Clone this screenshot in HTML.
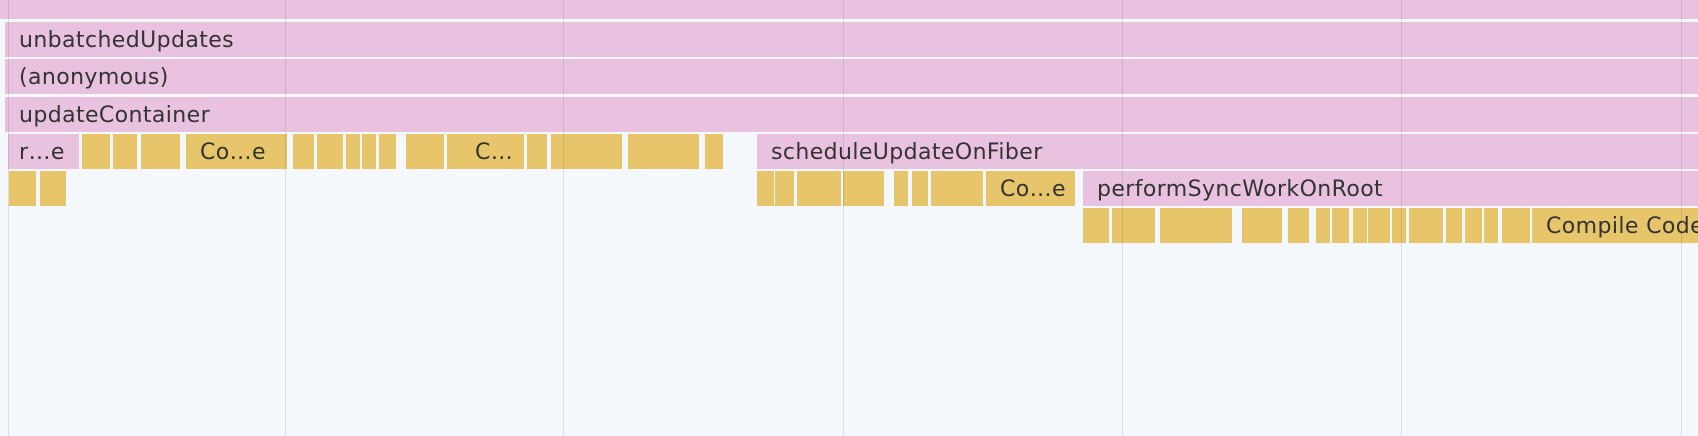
<!DOCTYPE html>
<html><head><style>
html,body{margin:0;padding:0}
body{width:1698px;height:436px;background:#f5f8fc;position:relative;overflow:hidden;font-family:"DejaVu Sans","Liberation Sans",sans-serif}
.b{position:absolute;height:35px;box-sizing:border-box;font-size:22px;line-height:37px;color:#333;padding-left:14px;white-space:nowrap;overflow:hidden;letter-spacing:0.4px}
.p{background:#e9c2e0}
.y{background:#e7c56a}
.g{position:absolute;top:0;width:1px;height:436px;background:rgba(0,0,0,0.1)}
</style></head><body>
<div class="b p" style="left:0;top:0;width:1698px;height:19px"></div>
<div class="b p" style="left:5px;top:22px;width:1693px">unbatchedUpdates</div>
<div class="b p" style="left:5px;top:59px;width:1693px">(anonymous)</div>
<div class="b p" style="left:5px;top:97px;width:1693px">updateContainer</div>
<div class="b p" style="left:8px;top:134px;width:71px;padding-left:11px">r…e</div>
<div class="b y" style="left:82px;top:134px;width:28px"></div>
<div class="b y" style="left:113px;top:134px;width:24px"></div>
<div class="b y" style="left:141px;top:134px;width:39px"></div>
<div class="b y" style="left:186px;top:134px;width:101px">Co…e</div>
<div class="b y" style="left:293px;top:134px;width:21px"></div>
<div class="b y" style="left:317px;top:134px;width:26px"></div>
<div class="b y" style="left:346px;top:134px;width:13px"></div>
<div class="b y" style="left:362px;top:134px;width:14px"></div>
<div class="b y" style="left:379px;top:134px;width:17px"></div>
<div class="b y" style="left:406px;top:134px;width:10px"></div>
<div class="b y" style="left:419px;top:134px;width:25px"></div>
<div class="b y" style="left:447px;top:134px;width:11px"></div>
<div class="b y" style="left:461px;top:134px;width:63px">C…</div>
<div class="b y" style="left:527px;top:134px;width:20px"></div>
<div class="b y" style="left:551px;top:134px;width:71px"></div>
<div class="b y" style="left:628px;top:134px;width:11px"></div>
<div class="b y" style="left:641px;top:134px;width:58px"></div>
<div class="b y" style="left:705px;top:134px;width:18px"></div>
<div class="b p" style="left:757px;top:134px;width:941px">scheduleUpdateOnFiber</div>
<div class="b y" style="left:9px;top:171px;width:27px"></div>
<div class="b y" style="left:40px;top:171px;width:26px"></div>
<div class="b y" style="left:757px;top:171px;width:17px"></div>
<div class="b y" style="left:775px;top:171px;width:19px"></div>
<div class="b y" style="left:797px;top:171px;width:44px"></div>
<div class="b y" style="left:843px;top:171px;width:41px"></div>
<div class="b y" style="left:894px;top:171px;width:14px"></div>
<div class="b y" style="left:912px;top:171px;width:16px"></div>
<div class="b y" style="left:931px;top:171px;width:52px"></div>
<div class="b y" style="left:986px;top:171px;width:89px">Co…e</div>
<div class="b p" style="left:1083px;top:171px;width:615px">performSyncWorkOnRoot</div>
<div class="b y" style="left:1083px;top:208px;width:26px"></div>
<div class="b y" style="left:1112px;top:208px;width:43px"></div>
<div class="b y" style="left:1160px;top:208px;width:11px"></div>
<div class="b y" style="left:1173px;top:208px;width:59px"></div>
<div class="b y" style="left:1242px;top:208px;width:40px"></div>
<div class="b y" style="left:1288px;top:208px;width:21px"></div>
<div class="b y" style="left:1316px;top:208px;width:13px"></div>
<div class="b y" style="left:1332px;top:208px;width:17px"></div>
<div class="b y" style="left:1353px;top:208px;width:12px"></div>
<div class="b y" style="left:1368px;top:208px;width:22px"></div>
<div class="b y" style="left:1392px;top:208px;width:14px"></div>
<div class="b y" style="left:1409px;top:208px;width:34px"></div>
<div class="b y" style="left:1446px;top:208px;width:16px"></div>
<div class="b y" style="left:1465px;top:208px;width:17px"></div>
<div class="b y" style="left:1484px;top:208px;width:14px"></div>
<div class="b y" style="left:1502px;top:208px;width:11px"></div>
<div class="b y" style="left:1515px;top:208px;width:15px"></div>
<div class="b y" style="left:1532px;top:208px;width:166px">Compile Code</div>
<div class="g" style="left:8px"></div>
<div class="g" style="left:285px"></div>
<div class="g" style="left:563px"></div>
<div class="g" style="left:843px"></div>
<div class="g" style="left:1122px"></div>
<div class="g" style="left:1401px"></div>
<div class="g" style="left:1681px"></div>
</body></html>
